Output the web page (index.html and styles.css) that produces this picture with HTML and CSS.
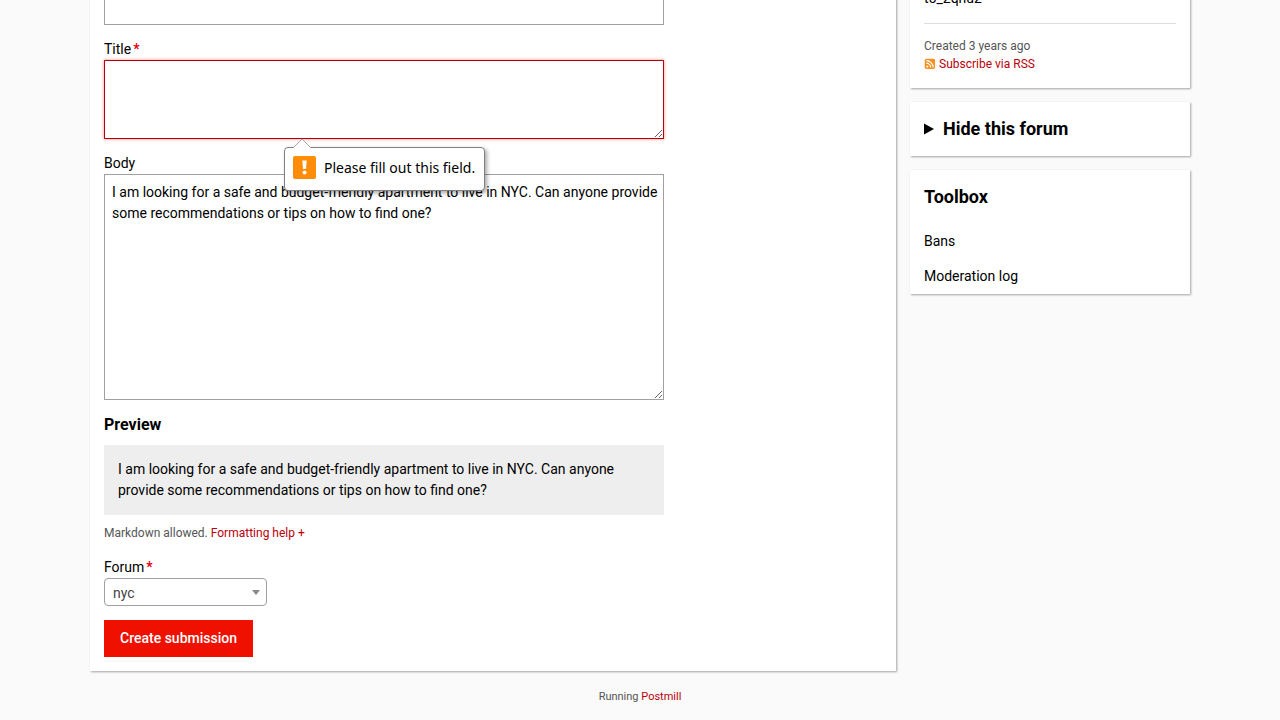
FILE: index.html
```html
<!DOCTYPE html>
<html lang="en">
<head>
<meta charset="utf-8">
<title>Create submission</title>
<link rel="stylesheet" href="styles.css">
</head>
<body>
<div class="layout">
  <main class="card main">
    <form class="form">
      <input class="control url" type="url" aria-label="URL">
      <div class="field">
        <label class="label" for="title">Title<b class="required">*</b></label>
        <textarea id="title" class="control title invalid"></textarea>
        <div class="tooltip" role="alert">
          <svg class="arrow" width="20" height="10" viewBox="0 0 20 10"><path d="M1 10L10 1L19 10" fill="#fff" stroke="#a8a8ac"/></svg>
          <svg class="warn" width="23" height="23" viewBox="0 0 23 23"><rect width="23" height="23" rx="2" fill="#ff8d0a"/><path d="M9.3 4.5h4.4l-.7 8.5h-3z" fill="#fff"/><circle cx="11.5" cy="16.5" r="2" fill="#fff"/></svg>
          <span>Please fill out this field.</span>
        </div>
      </div>
      <div class="field">
        <label class="label" for="body">Body</label>
        <textarea id="body" class="control body">I am looking for a safe and budget-friendly apartment to live in NYC. Can anyone provide some recommendations or tips on how to find one?</textarea>
      </div>
      <section class="preview">
        <h3>Preview</h3>
        <p class="preview-text">I am looking for a safe and budget-friendly apartment to live in NYC. Can anyone provide some recommendations or tips on how to find one?</p>
        <p class="help">Markdown allowed. <a href="#">Formatting help +</a></p>
      </section>
      <div class="field">
        <label class="label" for="forum">Forum<b class="required">*</b></label>
        <div class="select">
          <select id="forum"><option>nyc</option></select>
          <svg class="caret" width="8" height="5" viewBox="0 0 8 5"><path d="M0 0h8L4 5z" fill="#888"/></svg>
        </div>
      </div>
      <button class="submit" type="submit">Create submission</button>
    </form>
  </main>
  <aside class="sidebar">
    <section class="card about">
      <p>t5_2qhu2</p>
      <hr>
      <p class="meta">Created 3 years ago</p>
      <p class="meta"><a class="rss" href="#"><svg width="12" height="12" viewBox="0 0 12 12"><rect x="0.7" y="0.7" width="10.4" height="10.4" rx="1.8" fill="#f78f1e"/><circle cx="3.3" cy="8.6" r="1.1" fill="#fff"/><path d="M2.3 5.1a4.4 4.4 0 0 1 4.4 4.4M2.3 2.6a6.9 6.9 0 0 1 6.9 6.9" fill="none" stroke="#fff" stroke-width="1.2"/></svg>Subscribe via RSS</a></p>
    </section>
    <details class="card">
      <summary><svg width="10" height="12" viewBox="0 0 10 12"><path d="M0 0.5L10 6L0 11.5z"/></svg><h2>Hide this forum</h2></summary>
    </details>
    <section class="card toolbox">
      <h2>Toolbox</h2>
      <ul>
        <li><a href="#">Bans</a></li>
        <li><a href="#">Moderation log</a></li>
      </ul>
    </section>
  </aside>
</div>
<footer>Running <a href="#">Postmill</a></footer>
</body>
</html>
```
FILE: styles.css
```css
* { box-sizing: border-box; }
body {
  margin: 0;
  background: #fafafa;
  color: #000;
  font: 14px/21px Roboto, sans-serif;
  overflow: hidden;
}
p, h2, h3, ul { margin: 0; padding: 0; }
a { color: #bb000b; text-decoration: none; }
h2 { font-size: 18px; line-height: 26px; }

.layout {
  display: flex;
  align-items: flex-start;
  gap: 14px;
  max-width: 1100px;
  margin: -26px auto 0;
}
.card {
  background: #fff;
  padding: 14px;
  box-shadow: 1px 1px 2px rgba(0, 0, 0, .35);
}
.main { flex: 1; }
.form {
  display: flex;
  flex-direction: column;
  align-items: flex-start;
  gap: 14px;
  max-width: 560px;
}
.field, .preview { position: relative; width: 100%; }
.label { display: flex; gap: 2px; }
.required { color: #e3000f; }
.control {
  display: block;
  width: 100%;
  border: 1px solid #a0a0a0;
  border-radius: 0;
  padding: 7px 3px 7px 7px;
  background: #fff;
  color: #000;
  font: inherit;
  outline: 0;
}
.url { height: 37px; }
.title { height: 79px; }
.body { height: 226px; }
.invalid {
  border-color: #b3000d;
  box-shadow: 0 0 3px rgba(255, 0, 0, .5);
}

.tooltip {
  position: absolute;
  z-index: 1;
  top: 108px;
  left: 180px;
  display: flex;
  align-items: flex-start;
  gap: 8px;
  height: 44px;
  padding: 8px 9px 0 8px;
  border: 1px solid #808084;
  border-radius: 4px;
  background: #fff;
  box-shadow: 2px 2px 4px rgba(0, 0, 0, .35);
  font-family: "Noto Sans", sans-serif;
  line-height: 24px;
  white-space: nowrap;
}
.arrow { position: absolute; top: -10px; left: 7px; }

.preview h3 { font-size: 16px; line-height: 21px; margin-bottom: 10px; }
.preview-text { padding: 14px; background: #eee; }
.help, .meta { color: #555; font-size: 12px; line-height: 18px; }
.help { padding: 9px 0 1px; }

.select { position: relative; width: 163px; }
select {
  display: block;
  width: 100%;
  height: 28px;
  padding: 2px 8px 0;
  border: 1px solid #a0a0a0;
  border-radius: 4px;
  appearance: none;
  background: #fff;
  color: #444;
  font: inherit;
}
.caret { position: absolute; top: 12px; right: 7px; }
.submit {
  padding: 8px 16px;
  border: 0;
  background: #f01000;
  color: #fff;
  font: 500 14px/21px Roboto, sans-serif;
}

.sidebar {
  flex: 0 0 280px;
  display: flex;
  flex-direction: column;
  gap: 14px;
}
.about { padding-bottom: 15px; }
hr { margin: 14px 0 13px; border: 0; border-top: 1px solid #ddd; }
.rss { display: flex; align-items: center; gap: 3px; }
summary { display: flex; align-items: center; gap: 9px; list-style: none; }
.toolbox { padding-bottom: 0; }
.toolbox ul { margin-top: 14px; list-style: none; }
.toolbox a { display: block; padding: 7px 0; color: #000; }
footer { padding: 15px; color: #555; font-size: 11px; text-align: center; }
```
